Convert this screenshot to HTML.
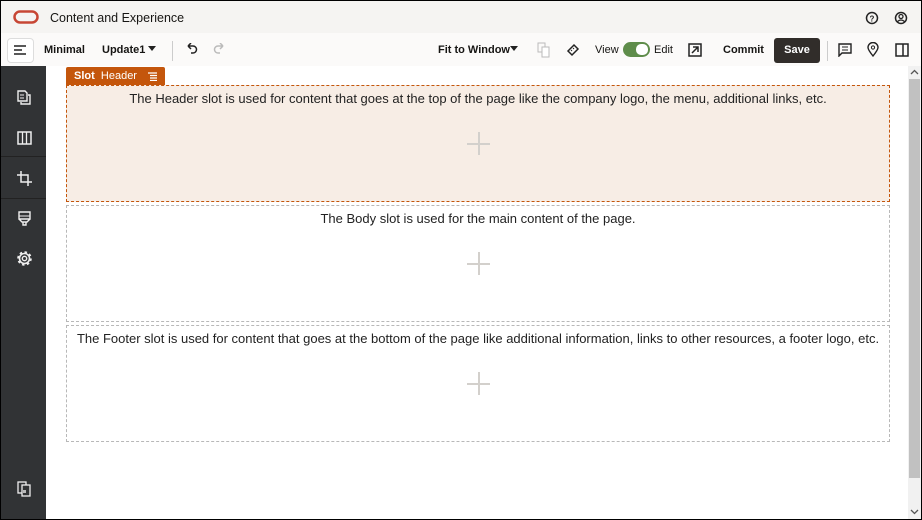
<!DOCTYPE html>
<html><head><meta charset="utf-8"><style>
*{box-sizing:border-box;margin:0;padding:0}
body{width:922px;height:520px;overflow:hidden;background:#000;font-family:"Liberation Sans",sans-serif;position:relative}
.frame{position:absolute;left:1px;top:1px;width:920px;height:518px;background:#fff;overflow:hidden}
.top{position:absolute;left:0;top:0;width:920px;height:32px;background:#f5f4f2}
.tb{position:absolute;left:0;top:32px;width:920px;height:33px;background:#fbfaf9}
.t{position:absolute;font-size:12px;color:#161513;white-space:nowrap}
.b{font-weight:bold;font-size:11px}
.side{position:absolute;left:0;top:65px;width:45px;height:453px;background:#313335}
.sep{position:absolute;left:0;width:45px;height:1px;background:#222}
.slot{position:absolute;left:65px;width:824px;border:1px dashed #b8b8b8;text-align:center;font-size:13px;color:#222;padding-top:5px}
.plus{position:absolute;left:400px;top:46px;width:24px;height:24px}
.plus:before{content:"";position:absolute;left:11px;top:0;width:1.5px;height:23px;background:#d3d0cc}
.plus:after{content:"";position:absolute;left:0;top:11px;width:23px;height:1.5px;background:#d3d0cc}
svg{position:absolute}
</style></head><body><div class="frame">
<div class="top"></div>
<svg style="left:12px;top:9px" width="26" height="14"><rect x="1.5" y="1.5" width="23" height="11" rx="5.5" fill="none" stroke="#c74634" stroke-width="2.5"/></svg>
<div class="t" style="left:49px;top:10px;font-size:12.5px">Content and Experience</div>
<svg style="left:864px;top:10px" width="14" height="14"><circle cx="7" cy="7" r="5.5" fill="none" stroke="#222" stroke-width="1.5"/><text x="7" y="10.5" font-size="8" text-anchor="middle" font-weight="bold" fill="#222" font-family="Liberation Sans">?</text></svg>
<svg style="left:893px;top:10px" width="14" height="14"><circle cx="7" cy="7" r="5.5" fill="none" stroke="#222" stroke-width="1.5"/><circle cx="7" cy="5.5" r="2" fill="none" stroke="#222" stroke-width="1.3"/><path d="M3.5 10.5q3.5-3 7 0" fill="none" stroke="#222" stroke-width="1.3"/></svg>
<div class="tb"></div>
<div style="position:absolute;left:6px;top:37px;width:27px;height:25px;border:1px solid #ddd;border-radius:4px;background:#fff"></div>
<svg style="left:12px;top:43px" width="14" height="12"><path d="M1 2h12M1 6h8M1 10h12" stroke="#222" stroke-width="1.5"/></svg>
<div class="t b" style="left:43px;top:43px">Minimal</div>
<div class="t b" style="left:101px;top:43px">Update1</div>
<svg style="left:147px;top:45px" width="9" height="6"><path d="M0 0h8L4 5z" fill="#222"/></svg>
<div style="position:absolute;left:171px;top:40px;width:1px;height:20px;background:#ccc"></div>
<svg style="left:183px;top:42px" width="14" height="12"><path d="M4 3h5a3.5 3.5 0 010 7H7M4 3l3-3M4 3l3 3" fill="none" stroke="#222" stroke-width="1.5"/></svg>
<svg style="left:212px;top:42px" width="14" height="12"><path d="M10 3H5a3.5 3.5 0 000 7h2M10 3L7 0M10 3L7 6" fill="none" stroke="#bbb" stroke-width="1.5"/></svg>
<div class="t b" style="left:437px;top:43px">Fit to Window</div>
<svg style="left:509px;top:45px" width="9" height="6"><path d="M0 0h8L4 5z" fill="#222"/></svg>
<svg style="left:536px;top:41px" width="14" height="16"><rect x="1" y="1" width="7" height="9" fill="none" stroke="#bbb"/><rect x="5" y="5" width="7" height="10" fill="#fff" stroke="#bbb"/></svg>
<svg style="left:564px;top:41px" width="16" height="16"><path d="M3 9l6-6 4 4-6 6z" fill="none" stroke="#222" stroke-width="1.5"/><path d="M6 8l1 1M8 6l1 1" stroke="#222"/></svg>
<div class="t" style="left:594px;top:43px;font-size:11px">View</div>
<div style="position:absolute;left:622px;top:41px;width:27px;height:15px;border-radius:8px;background:#5e8c4a"></div>
<div style="position:absolute;left:635px;top:43px;width:12px;height:11px;border-radius:5px;background:#fff"></div>
<div class="t" style="left:653px;top:43px;font-size:11px">Edit</div>
<svg style="left:687px;top:42px" width="14" height="14"><rect x="1" y="1" width="12" height="12" fill="none" stroke="#222" stroke-width="1.5"/><path d="M4 10l6-6M5 4h5v5" fill="none" stroke="#222" stroke-width="1.5"/></svg>
<div class="t b" style="left:722px;top:43px">Commit</div>
<div style="position:absolute;left:773px;top:37px;width:46px;height:25px;background:#312d2a;border-radius:3px;color:#fff;font-size:11px;font-weight:bold;text-align:center;line-height:25px">Save</div>
<div style="position:absolute;left:826px;top:40px;width:1px;height:20px;background:#ccc"></div>
<svg style="left:837px;top:42px" width="14" height="14"><path d="M1 1h12v9H4l-3 3z" fill="none" stroke="#222" stroke-width="1.4"/><path d="M4 4h6M4 7h6" stroke="#222"/></svg>
<svg style="left:866px;top:41px" width="12" height="15"><path d="M6 14C2 9 1 7 1 5.5a5 5 0 0110 0C11 7 10 9 6 14z" fill="none" stroke="#222" stroke-width="1.4"/><circle cx="6" cy="5.5" r="1.6" fill="none" stroke="#222"/></svg>
<svg style="left:894px;top:42px" width="14" height="14"><rect x="1" y="1" width="12" height="12" fill="none" stroke="#222" stroke-width="1.5"/><path d="M8 1v12" stroke="#222" stroke-width="1.5"/></svg>

<div class="side"></div>
<div class="sep" style="top:155px"></div><div class="sep" style="top:197px"></div>
<svg style="left:16px;top:89px" width="14" height="15"><path d="M1 1h7l2 2v8H1z" fill="none" stroke="#eee" stroke-width="1.4"/><path d="M3 5h4M3 8h4" stroke="#eee"/><path d="M11 5h2v9H4v-2" fill="none" stroke="#eee" stroke-width="1.4"/></svg>
<svg style="left:16px;top:130px" width="15" height="14"><rect x="1" y="1" width="13" height="12" fill="none" stroke="#eee" stroke-width="1.5"/><path d="M5.5 1v12M9.5 1v12" stroke="#eee" stroke-width="1.3"/></svg>
<svg style="left:16px;top:170px" width="15" height="15"><path d="M4 0v11h11M0 4h11v11" fill="none" stroke="#eee" stroke-width="1.5"/></svg>
<svg style="left:17px;top:210px" width="13" height="15"><path d="M1 1h11v7H1zM1 8l3 3h5l3-3M5 11v3h3v-3" fill="none" stroke="#eee" stroke-width="1.4"/><path d="M1 5h11" stroke="#eee"/></svg>
<svg style="left:16px;top:250px" width="15" height="15"><circle cx="7.5" cy="7.5" r="2.2" fill="none" stroke="#eee" stroke-width="1.4"/><circle cx="7.5" cy="7.5" r="5" fill="none" stroke="#eee" stroke-width="1.6"/><circle cx="7.5" cy="7.5" r="6.4" fill="none" stroke="#eee" stroke-width="1.8" stroke-dasharray="2.5 2.5"/></svg>
<svg style="left:16px;top:480px" width="15" height="16"><rect x="1" y="1" width="8" height="11" fill="none" stroke="#eee" stroke-width="1.3"/><rect x="5" y="4" width="8" height="11" fill="#313335" stroke="#eee" stroke-width="1.3"/><rect x="6" y="9" width="3" height="3" fill="#bbb"/></svg>

<div style="position:absolute;left:65px;top:66px;width:99px;height:18px;background:#c4560c;border-radius:2px 2px 0 0;color:#fff;font-size:11px;line-height:18px;padding-left:8px"><b>Slot</b>&nbsp; Header</div>
<svg style="left:147px;top:71px" width="10" height="9"><path d="M0 1h9M2 3.5h7M2 6h7M2 8.5h7" stroke="#fff" stroke-width="1.2"/></svg>
<div class="slot" style="top:84px;height:117px;background:#f7ede5;border-color:#c4560c">The Header slot is used for content that goes at the top of the page like the company logo, the menu, additional links, etc.<div class="plus"></div></div>
<div class="slot" style="top:204px;height:117px">The Body slot is used for the main content of the page.<div class="plus"></div></div>
<div class="slot" style="top:324px;height:117px">The Footer slot is used for content that goes at the bottom of the page like additional information, links to other resources, a footer logo, etc.<div class="plus"></div></div>

<div style="position:absolute;left:907px;top:65px;width:13px;height:453px;background:#f1f1f1"></div>
<div style="position:absolute;left:908px;top:78px;width:11px;height:399px;background:#c1c1c1"></div>
<svg style="left:909px;top:68px" width="9" height="6"><path d="M1 5l3.5-3.5L8 5" fill="none" stroke="#555" stroke-width="1.3"/></svg>
<svg style="left:909px;top:508px" width="9" height="6"><path d="M1 1l3.5 3.5L8 1" fill="none" stroke="#555" stroke-width="1.3"/></svg>
</div></body></html>
